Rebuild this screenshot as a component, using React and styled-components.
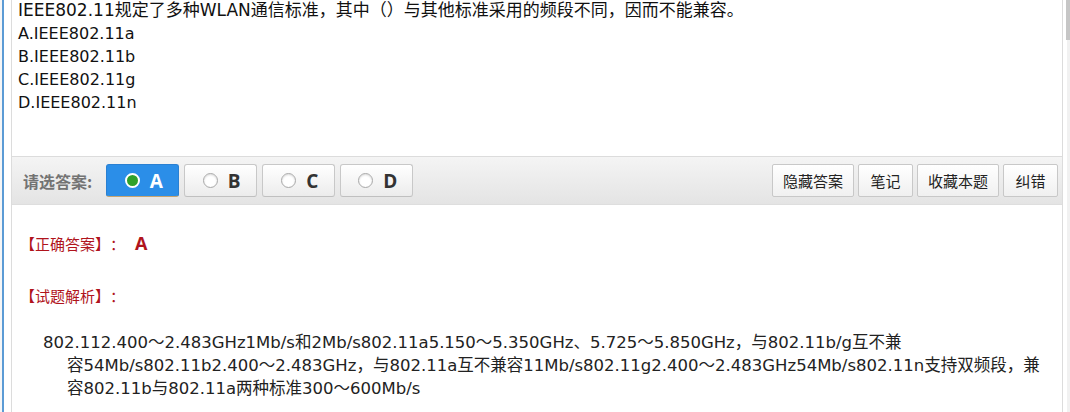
import React, { useState } from 'react'
import styled, { createGlobalStyle } from 'styled-components'

const Global = createGlobalStyle`
  html, body { margin: 0; padding: 0; background: #fff; }
  body {
    font-family: "DejaVu Sans", "Noto Sans CJK SC", sans-serif;
    text-spacing-trim: space-all;
    overflow: hidden;
  }
`

const options = [
  { key: 'A', text: 'IEEE802.11a' },
  { key: 'B', text: 'IEEE802.11b' },
  { key: 'C', text: 'IEEE802.11g' },
  { key: 'D', text: 'IEEE802.11n' },
]

const tools = ['隐藏答案', '笔记', '收藏本题', '纠错']

const analysis = [
  '802.112.400～2.483GHz1Mb/s和2Mb/s802.11a5.150～5.350GHz、5.725～5.850GHz，与802.11b/g互不兼',
  '容54Mb/s802.11b2.400～2.483GHz，与802.11a互不兼容11Mb/s802.11g2.400～2.483GHz54Mb/s802.11n支持双频段，兼',
  '容802.11b与802.11a两种标准300～600Mb/s',
]

const App = () => {
  const [picked, setPicked] = useState('A')
  return (
    <Page>
      <Global />
      <Rail />
      <Panel>
        <Question>
          <Line $size={17}>IEEE802.11规定了多种WLAN通信标准，其中（）与其他标准采用的频段不同，因而不能兼容。</Line>
          {options.map((o) => (
            <Line key={o.key} $size={16}>{o.key}.{o.text}</Line>
          ))}
        </Question>
        <Toolbar>
          <Label>请选答案:</Label>
          <Choices>
            {options.map((o) => (
              <Choice key={o.key} $active={picked === o.key} onClick={() => setPicked(o.key)}>
                <Radio $active={picked === o.key} />
                {o.key}
              </Choice>
            ))}
          </Choices>
          <Tools>
            {tools.map((t) => (
              <ToolButton key={t}>{t}</ToolButton>
            ))}
          </Tools>
        </Toolbar>
        <Answer>
          <Heading>
            【正确答案】：<strong>A</strong>
          </Heading>
          <Heading>【试题解析】：</Heading>
          <Explain>
            {analysis.map((line, i) => (
              <span key={i}>{line}</span>
            ))}
          </Explain>
        </Answer>
      </Panel>
      <Scroll>
        <div className="thumb" />
      </Scroll>
    </Page>
  )
}

export default App

const Page = styled.div`
  display: flex;
  width: 1070px;
  height: 412px;
  overflow: hidden;
`

const Rail = styled.div`
  width: 11px;
  flex: none;
  box-sizing: border-box;
  border-left: 2px solid #f6f6f6;
  &::before {
    content: '';
    display: block;
    width: 2px;
    height: 100%;
    background: #5b9bd5;
  }
`

const Panel = styled.div`
  width: 1050px;
  flex: none;
  border-left: 1px solid #dcdcdc;
  border-right: 1px solid #dcdcdc;
  display: flex;
  flex-direction: column;
`

const Question = styled.div`
  height: 158px;
  flex: none;
  box-sizing: border-box;
  padding: 0 6px;
  margin-top: -1px;
  border-bottom: 1px solid #dcdcdc;
`

const Line = styled.p`
  margin: 0;
  font-size: ${(p) => p.$size}px;
  line-height: 23px;
  color: #111;
  white-space: nowrap;
`

const Toolbar = styled.div`
  height: 48px;
  flex: none;
  box-sizing: border-box;
  display: flex;
  align-items: center;
  padding: 0 4px 0 11px;
  background: linear-gradient(#f4f4f4, #e4e4e4);
  border-bottom: 1px solid #dedede;
`

const Label = styled.span`
  font-family: "Noto Sans CJK SC", sans-serif;
  font-size: 16px;
  font-weight: 700;
  color: #737373;
  margin-right: 14px;
`

const Choices = styled.div`
  display: flex;
  gap: 5px;
`

const Choice = styled.button`
  width: 73px;
  height: 33px;
  display: flex;
  align-items: center;
  justify-content: center;
  gap: 10px;
  border-radius: 3px;
  font-family: "Open Sans", "Noto Sans", sans-serif;
  font-size: 19px;
  font-weight: 700;
  cursor: pointer;
  padding: 0 0 0 2px;
  color: ${(p) => (p.$active ? '#fff' : '#333')};
  border: 1px solid ${(p) => (p.$active ? '#2a80d2' : '#c8c8c8')};
  border-bottom-color: ${(p) => (p.$active ? '#c6a470' : '#c0c0c0')};
  background: ${(p) => (p.$active ? '#2b8ee8' : 'linear-gradient(#ffffff, #ececec)')};
`

const Radio = styled.span`
  flex: none;
  width: 15px;
  height: 15px;
  box-sizing: border-box;
  border-radius: 50%;
  background: ${(p) => (p.$active ? '#2fa12a' : '#fff')};
  border: ${(p) => (p.$active ? '2px solid #fff' : '1px solid #a8a8a8')};
  box-shadow: ${(p) => (p.$active ? 'none' : 'inset 0 1px 2px rgba(0,0,0,0.15)')};
`

const Tools = styled.div`
  margin-left: auto;
  display: flex;
  gap: 4px;
`

const ToolButton = styled.button`
  height: 33px;
  min-width: 55px;
  padding: 0 10px;
  border: 1px solid #c8c8c8;
  border-radius: 2px;
  background: linear-gradient(#ffffff, #f0f0f0);
  font-family: "Noto Sans CJK SC", sans-serif;
  font-size: 15px;
  color: #222;
  cursor: pointer;
`

const Answer = styled.div`
  padding: 28px 0 0 8px;
`

const Heading = styled.div`
  font-family: "Noto Sans CJK SC", sans-serif;
  font-size: 15px;
  line-height: 20px;
  color: #b0141c;
  margin-bottom: 32px;
  strong {
    font-family: "Open Sans", sans-serif;
    font-size: 18px;
    margin-left: 10px;
  }
`

const Explain = styled.div`
  margin-top: -7px;
  padding-left: 47px;
  text-indent: -24px;
  font-size: 16.5px;
  line-height: 23px;
  color: #222;
  span {
    display: block;
    white-space: nowrap;
  }
  span + span {
    text-indent: 0;
  }
`

const Scroll = styled.div`
  flex: 1;
  display: flex;
  justify-content: flex-end;
  background: linear-gradient(90deg, #fff 0 4px, #f1f1f1 4px);
  .thumb {
    width: 4px;
    height: 40px;
    background: #c6c6c6;
  }
`
